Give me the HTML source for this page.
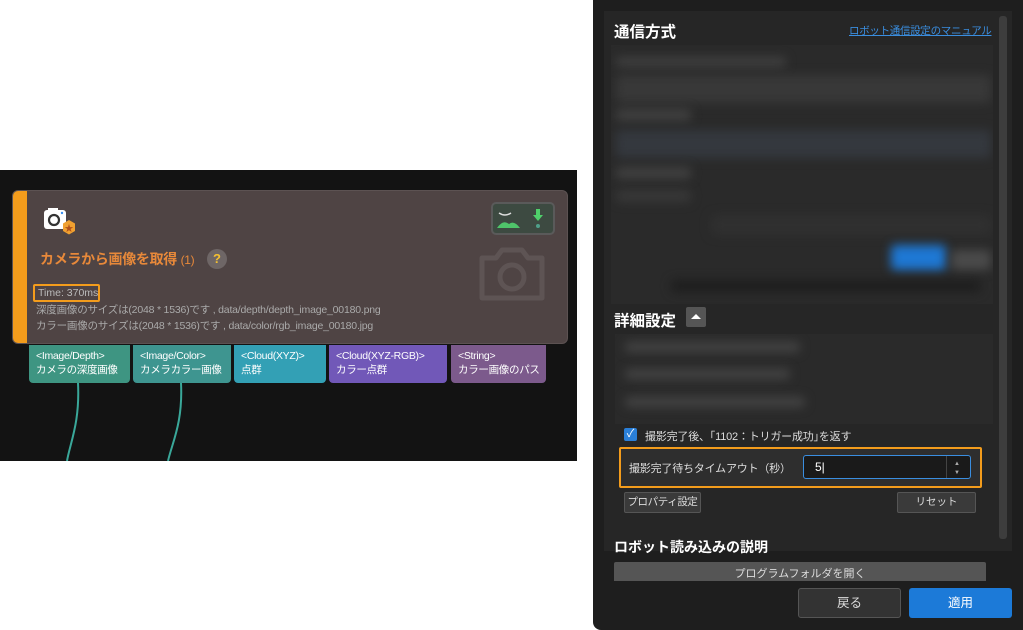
<!DOCTYPE html>
<html><head><meta charset="utf-8"><style>
*{box-sizing:border-box;margin:0;padding:0}
body{width:1023px;height:630px;background:#fff;position:relative;overflow:hidden;font-family:"Liberation Sans","Noto Sans CJK JP",sans-serif}
.a{position:absolute;white-space:nowrap}
.bl{position:absolute;filter:blur(5px);border-radius:4px}
.port{position:absolute;top:345px;height:38px;border-radius:0 0 4px 4px;color:#fff;font-size:10.5px;line-height:14px;padding:4px 0 0 7px;white-space:nowrap;overflow:hidden;letter-spacing:-0.3px}
</style></head><body>
<div class="a" style="left:0;top:170px;width:577px;height:291px;background:#131313"></div>
<svg class="a" style="left:0;top:383px" width="577" height="78"><path d="M78 0 C80 40 70 60 67 78" stroke="#3aa89a" stroke-width="2" fill="none"/><path d="M181 0 C183 40 172 60 168 78" stroke="#3aa89a" stroke-width="2" fill="none"/></svg>
<div class="a" style="left:12px;top:190px;width:556px;height:154px;background:#4f4444;border-radius:6px;overflow:hidden;border:1px solid #5c5252">
<div class="a" style="left:0;top:0;width:14px;height:154px;background:#f39c1c"></div>
</div>
<svg class="a" style="left:43px;top:208px" width="34" height="30"><rect x="1" y="2" width="22" height="19" rx="3" fill="#fff"/><rect x="5" y="0" width="10" height="4" fill="#fff"/><circle cx="11" cy="12" r="5" fill="none" stroke="#333" stroke-width="2.2"/><circle cx="19" cy="5" r="1.2" fill="#3a8ef0"/><polygon points="26,12 32,15.5 32,23 26,26.5 20,23 20,15.5" fill="#f0a030"/><text x="26" y="23.5" font-size="9" text-anchor="middle" fill="#b0501a">★</text></svg>
<div class="a" style="left:40px;top:249px;color:#e8893a;font-size:14px;font-weight:bold;letter-spacing:-0.3px">カメラから画像を取得 <span style="font-size:12px;font-weight:normal">(1)</span></div>
<div class="a" style="left:207px;top:249px;width:20px;height:20px;border-radius:50%;background:#6e6666;color:#f4c030;font-size:13px;text-align:center;line-height:20px;font-weight:bold">?</div>
<div class="a" style="left:33px;top:284px;width:67px;height:18px;border:2px solid #f39c1c;border-radius:2px"></div>
<div class="a" style="left:38px;top:287px;color:#bbb;font-size:10.5px;line-height:13px">Time: 370ms</div>
<div class="a" style="left:36px;top:303px;color:#aaa;font-size:10.5px;line-height:15.5px;letter-spacing:-0.2px">深度画像のサイズは(2048 * 1536)です , data/depth/depth_image_00180.png<br>カラー画像のサイズは(2048 * 1536)です , data/color/rgb_image_00180.jpg</div>
<div class="a" style="left:491px;top:202px;width:64px;height:33px;border-radius:5px;background:#3d4a41;border:2px solid #5a5a5a"></div>
<svg class="a" style="left:496px;top:206px" width="56" height="26"><path d="M3 7 Q9 11 15 7" stroke="#ddd" stroke-width="1.5" fill="none"/><path d="M1 22 Q7 13 13 18 Q18 14 24 22Z" fill="#4fc46a"/><rect x="40" y="3" width="4" height="7" fill="#4fd06a"/><polygon points="37,9 47,9 42,15" fill="#4fd06a"/><circle cx="42" cy="20" r="2" fill="#4fa08a"/></svg>
<svg class="a" style="left:478px;top:240px" width="68" height="62"><path d="M4 18 h14 l6 -8 h20 l6 8 h14 v40 h-60z" fill="none" stroke="#5e5454" stroke-width="5" stroke-linejoin="round"/><circle cx="34" cy="37" r="12" fill="none" stroke="#5e5454" stroke-width="5"/></svg>
<div class="port" style="left:29px;width:101px;background:#3e9582">&lt;Image/Depth&gt;<br>カメラの深度画像</div>
<div class="port" style="left:133px;width:98px;background:#3e9590">&lt;Image/Color&gt;<br>カメラカラー画像</div>
<div class="port" style="left:234px;width:92px;background:#33a0b5">&lt;Cloud(XYZ)&gt;<br>点群</div>
<div class="port" style="left:329px;width:118px;background:#7158b8">&lt;Cloud(XYZ-RGB)&gt;<br>カラー点群</div>
<div class="port" style="left:451px;width:95px;background:#7c5a8c">&lt;String&gt;<br>カラー画像のパス</div>

<div class="a" style="left:593px;top:0;width:430px;height:630px;background:#1e1e1e;border-radius:0 0 0 8px"></div>
<div class="a" style="left:604px;top:11px;width:408px;height:540px;background:#262626"></div>
<div class="a" style="left:999px;top:16px;width:8px;height:523px;background:#3d3d3d;border-radius:3px"></div>
<div class="a" style="left:614px;top:20px;color:#fff;font-size:15.5px;font-weight:bold">通信方式</div>
<div class="a" style="left:849px;top:23px;color:#3a8ee0;font-size:10.5px;text-decoration:underline;letter-spacing:-0.3px">ロボット通信設定のマニュアル</div>
<div class="a" style="left:611px;top:45px;width:382px;height:259px;background:#2a2a2a;overflow:hidden">
<div class="bl" style="left:5px;top:12px;width:170px;height:10px;background:#404040"></div>
<div class="bl" style="left:5px;top:30px;width:375px;height:28px;background:#383838"></div>
<div class="bl" style="left:5px;top:64px;width:75px;height:12px;background:#404040"></div>
<div class="bl" style="left:5px;top:85px;width:375px;height:28px;background:#34383e"></div>
<div class="bl" style="left:5px;top:122px;width:75px;height:12px;background:#404040"></div>
<div class="bl" style="left:5px;top:145px;width:75px;height:12px;background:#383838"></div>
<div class="bl" style="left:100px;top:170px;width:280px;height:20px;background:#303030"></div>
<div class="bl" style="left:280px;top:200px;width:55px;height:25px;background:#1e78d4"></div>
<div class="bl" style="left:340px;top:205px;width:40px;height:20px;background:#4a4a4a"></div>
<div class="bl" style="left:60px;top:235px;width:310px;height:12px;background:#1e1e1e"></div>
</div>
<div class="a" style="left:614px;top:309px;color:#fff;font-size:15.5px;font-weight:bold">詳細設定</div>
<div class="a" style="left:686px;top:307px;width:20px;height:20px;background:#555;border-radius:2px"></div>
<div class="a" style="left:691px;top:314px;border-left:5px solid transparent;border-right:5px solid transparent;border-bottom:5px solid #fff"></div>
<div class="a" style="left:615px;top:334px;width:378px;height:90px;background:#2a2a2a;overflow:hidden">
<div class="bl" style="left:10px;top:8px;width:175px;height:10px;background:#444"></div>
<div class="bl" style="left:10px;top:35px;width:165px;height:10px;background:#444"></div>
<div class="bl" style="left:10px;top:63px;width:180px;height:10px;background:#444"></div>
</div>
<div class="a" style="left:624px;top:428px;width:13px;height:13px;background:#2a7fd8;border-radius:2px;color:#fff;font-size:11px;line-height:13px;text-align:center">✓</div>
<div class="a" style="left:645px;top:428px;color:#ddd;font-size:11px;letter-spacing:-0.2px">撮影完了後、｢1102：トリガー成功｣を返す</div>
<div class="a" style="left:619px;top:447px;width:363px;height:41px;border:2px solid #f39c1c;border-radius:2px;background:#2e2e2e"></div>
<div class="a" style="left:629px;top:460px;color:#ddd;font-size:11px;letter-spacing:-0.2px">撮影完了待ちタイムアウト（秒）</div>
<div class="a" style="left:803px;top:455px;width:168px;height:24px;border:1px solid #3a8ee0;border-radius:3px;background:#1a1a1a"></div>
<div class="a" style="left:946px;top:456px;width:1px;height:22px;background:#444"></div>
<div class="a" style="left:954px;top:461px;color:#aaa;font-size:6px">▲</div>
<div class="a" style="left:954px;top:470px;color:#aaa;font-size:6px">▼</div>
<div class="a" style="left:815px;top:460px;color:#fff;font-size:12px">5|</div>
<div class="a" style="left:624px;top:492px;width:77px;height:21px;background:#3a3a3a;border:1px solid #555;border-radius:2px;color:#ddd;font-size:10.5px;text-align:center;line-height:19px;letter-spacing:-0.4px">プロパティ設定</div>
<div class="a" style="left:897px;top:492px;width:79px;height:21px;background:#3a3a3a;border:1px solid #555;border-radius:2px;color:#ddd;font-size:10.5px;text-align:center;line-height:19px">リセット</div>
<div class="a" style="left:614px;top:537px;color:#fff;font-size:14px;font-weight:bold">ロボット読み込みの説明</div>
<div class="a" style="left:614px;top:562px;width:372px;height:19px;background:#555;color:#ddd;font-size:11px;text-align:center;line-height:24px;overflow:hidden;border-radius:2px 2px 0 0">プログラムフォルダを開く</div>
<div class="a" style="left:798px;top:588px;width:103px;height:30px;background:#333;border:1px solid #555;border-radius:3px;color:#ddd;font-size:12.5px;text-align:center;line-height:28px">戻る</div>
<div class="a" style="left:909px;top:588px;width:103px;height:30px;background:#1c7ad8;border-radius:3px;color:#fff;font-size:12.5px;text-align:center;line-height:30px">適用</div>
</body></html>
